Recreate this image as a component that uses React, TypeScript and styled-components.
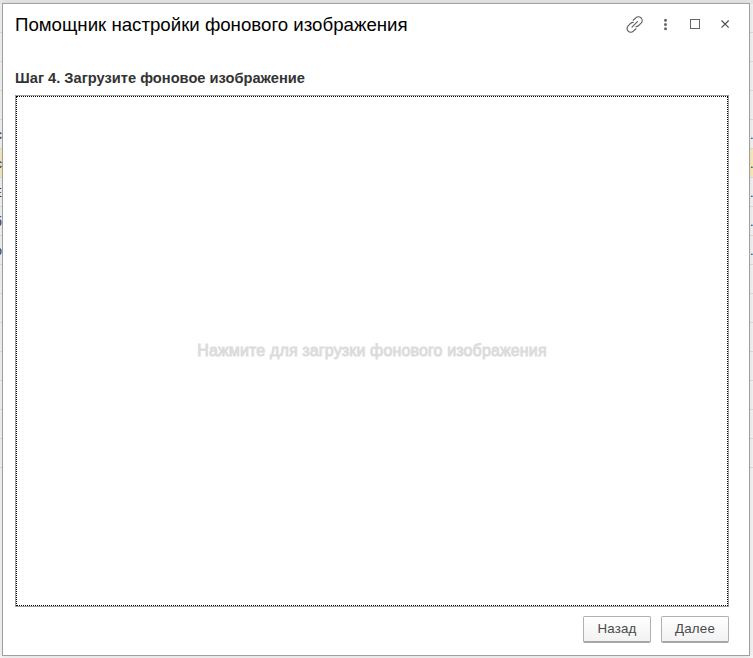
import React from "react";
import styled, { createGlobalStyle } from "styled-components";

const GlobalStyle = createGlobalStyle`
  * { box-sizing: border-box; }
  html, body { margin: 0; padding: 0; overflow: hidden; background: #f2f2f2; }
  body { font-family: "Liberation Sans", Arial, sans-serif; }
`;

const Screen = styled.div`
  position: relative;
  width: 753px;
  height: 658px;
  overflow: hidden;
  background: #f6f6f6;
`;

const Backdrop = styled.div`
  display: flex;
  flex-direction: column;
  padding-top: 4px;
  background: linear-gradient(#e8e8e8 0, #e8e8e8 4px, #f5f5f5 4px);
`;

const ListRow = styled.div<{ $selected?: boolean }>`
  display: flex;
  justify-content: space-between;
  height: 29px;
  padding-top: 7px;
  border-bottom: 1px solid #dedede;
  background: ${(p) => (p.$selected ? "#fcedbe" : "transparent")};
  font-size: 13px;
  line-height: 15px;
  color: #333;
`;

const CellStart = styled.span`
  display: flex;
  justify-content: flex-end;
  width: 2px;
  overflow: hidden;
`;

const CellEnd = styled.span`
  width: 3px;
  overflow: hidden;
`;

const Dialog = styled.section`
  position: absolute;
  left: 2px;
  top: 3px;
  width: 748px;
  height: 653px;
  display: flex;
  flex-direction: column;
  padding: 0 20px 12px 12px;
  background: #fff;
  border: 1px solid #a0a0a0;
  box-shadow: 0 0 7px rgba(0, 0, 0, 0.12);
`;

const Header = styled.header`
  display: flex;
  align-items: center;
  justify-content: space-between;
  height: 40px;
  margin-right: -6px;
`;

const Title = styled.h1`
  margin: 0;
  padding-top: 2px;
  font-size: 18.67px;
  line-height: 22px;
  font-weight: 400;
  color: #000;
  white-space: nowrap;
`;

const Tools = styled.div`
  display: flex;
  gap: 10px;
`;

const Tool = styled.button`
  display: flex;
  width: 20px;
  height: 20px;
  padding: 0;
  border: 0;
  background: none;
`;

const StepTitle = styled.h2`
  margin: 24px 0 0;
  height: 27px;
  font-size: 14.67px;
  line-height: 20px;
  font-weight: 700;
  color: #333;
  white-space: nowrap;
`;

const UploadFrame = styled.div`
  display: flex;
  height: 512px;
  border: 1px solid #a0a0a0;
`;

const UploadArea = styled.div`
  flex: 1;
  display: flex;
  align-items: center;
  justify-content: center;
  border: 1px dotted #000;
  font-size: 16px;
  line-height: 20px;
  font-weight: 400;
  letter-spacing: 0.14px;
  color: #dcdcdc;
  -webkit-text-stroke: 0.9px #dcdcdc;
  white-space: nowrap;
`;

const Footer = styled.footer`
  display: flex;
  justify-content: flex-end;
  gap: 10px;
  padding-top: 9px;
`;

const Button = styled.button`
  width: 68px;
  height: 27px;
  padding: 0 0 1px;
  border: 1px solid #b0b0b0;
  border-bottom: 2px solid #a6a6a6;
  border-radius: 2px;
  background: linear-gradient(#fff, #f2f2f2);
  font: 13.33px/20px "Liberation Sans", Arial, sans-serif;
  letter-spacing: 0.2px;
  color: #4a4a4a;
`;

const rows = [
  { start: "", end: "" },
  { start: "", end: "" },
  { start: "", end: "" },
  { start: "", end: "" },
  { start: "с", end: "..." },
  { start: "с", end: "...", selected: true },
  { start: "Е", end: "..." },
  { start: "б", end: "..." },
  { start: "о", end: "..." },
  ...Array.from({ length: 7 }, () => ({ start: "", end: "" })),
];

export default function App() {
  return (
    <Screen>
      <GlobalStyle />
      <Backdrop>
        {rows.map((row, i) => (
          <ListRow key={i} $selected={"selected" in row}>
            <CellStart>{row.start}</CellStart>
            <CellEnd>{row.end}</CellEnd>
          </ListRow>
        ))}
      </Backdrop>
      <Dialog>
        <Header>
          <Title>Помощник настройки фонового изображения</Title>
          <Tools>
            <Tool aria-label="Получить ссылку">
              <svg width="20" height="20" viewBox="0 0 20 20" fill="none" stroke="#5c5c5c" strokeWidth="1.15" strokeLinecap="round">
                <path d="M8.2 6.2L10.8 3.9a3.7 3.7 0 0 1 5.3 5.2L13.3 11.8q-1 .9-2.3.8" />
                <path d="M11 14.8L8.4 17.1a3.7 3.7 0 0 1-5.3-5.2L5.9 9.2q1-.9 2.3-.8" />
                <path d="M7 13.2l5.4-5.5" />
              </svg>
            </Tool>
            <Tool aria-label="Ещё">
              <svg width="20" height="20" viewBox="0 0 20 20" fill="#666">
                <circle cx="10.5" cy="6.2" r="1.5" />
                <circle cx="10.5" cy="10.5" r="1.5" />
                <circle cx="10.5" cy="14.8" r="1.5" />
              </svg>
            </Tool>
            <Tool aria-label="Развернуть">
              <svg width="20" height="20" viewBox="0 0 20 20" fill="none" stroke="#666">
                <rect x="5.5" y="5.5" width="9" height="9" />
              </svg>
            </Tool>
            <Tool aria-label="Закрыть">
              <svg width="20" height="20" viewBox="0 0 20 20" fill="none" stroke="#505050" strokeWidth="1.2">
                <path d="M6.5 6.5l7.2 7.2M13.7 6.5l-7.2 7.2" />
              </svg>
            </Tool>
          </Tools>
        </Header>
        <StepTitle>Шаг 4. Загрузите фоновое изображение</StepTitle>
        <UploadFrame>
          <UploadArea>Нажмите для загрузки фонового изображения</UploadArea>
        </UploadFrame>
        <Footer>
          <Button>Назад</Button>
          <Button>Далее</Button>
        </Footer>
      </Dialog>
    </Screen>
  );
}
